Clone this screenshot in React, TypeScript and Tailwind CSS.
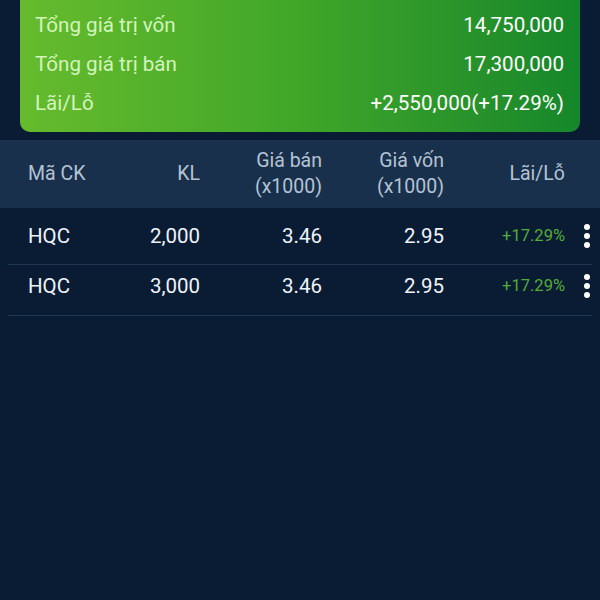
import { EllipsisVertical } from "lucide-react";

const summary = [
  { label: "Tổng giá trị vốn", value: "14,750,000" },
  { label: "Tổng giá trị bán", value: "17,300,000" },
  { label: "Lãi/Lỗ", value: "+2,550,000(+17.29%)" },
];

const rows = [
  { code: "HQC", qty: "2,000", sell: "3.46", cost: "2.95", pnl: "+17.29%" },
  { code: "HQC", qty: "3,000", sell: "3.46", cost: "2.95", pnl: "+17.29%" },
];

function Dots() {
  return (
    <div className="flex flex-col items-center gap-[3px] w-[8px]">
      <span className="size-[6px] rounded-full bg-white" />
      <span className="size-[6px] rounded-full bg-white" />
      <span className="size-[6px] rounded-full bg-white" />
    </div>
  );
}

export default function App() {
  return (
    <div
      className="w-[600px] h-[600px] bg-[#0a1b34] overflow-hidden"
      style={{ fontFamily: "Roboto, 'Noto Sans', sans-serif" }}
    >
      <div className="mx-[20px] h-[132px] rounded-b-[10px] bg-gradient-to-r from-[#66bb2d] via-[#3fa629] to-[#15872b] pl-[15px] pr-[16px] pt-[6px] text-[20.6px]">
        {summary.map((s) => (
          <div key={s.label} className="flex h-[39px] items-center justify-between">
            <span className="text-[#d3f5bd]">{s.label}</span>
            <span className="text-white">{s.value}</span>
          </div>
        ))}
      </div>

      <div className="mt-[8px] flex h-[68px] items-center bg-[#19304c] pl-[28px] text-[19.5px] leading-[26px] text-[#b4c3d4]">
        <div className="w-[100px]">Mã CK</div>
        <div className="w-[72px] text-right">KL</div>
        <div className="w-[122px] text-right">
          Giá bán
          <br />
          (x1000)
        </div>
        <div className="w-[122px] text-right">
          Giá vốn
          <br />
          (x1000)
        </div>
        <div className="w-[121px] text-right">Lãi/Lỗ</div>
      </div>

      <div className="text-[20.5px] text-[#eef3f8]">
        {rows.map((r, i) => (
          <div key={i}>
            <div
              className={
                i === 0
                  ? "flex h-[56px] items-center pl-[28px]"
                  : "flex h-[50px] items-center pl-[28px] pb-[8px]"
              }
            >
              <div className="w-[100px]">{r.code}</div>
              <div className="w-[72px] text-right">{r.qty}</div>
              <div className="w-[122px] text-right">{r.sell}</div>
              <div className="w-[122px] text-right">{r.cost}</div>
              <div className="w-[121px] text-right text-[16.5px] text-[#52ad38]">{r.pnl}</div>
              <div className="ml-[18px]">
                <Dots />
              </div>
            </div>
            <div className="mx-[8px] h-px bg-[#1f3651]" />
          </div>
        ))}
      </div>
    </div>
  );
}
